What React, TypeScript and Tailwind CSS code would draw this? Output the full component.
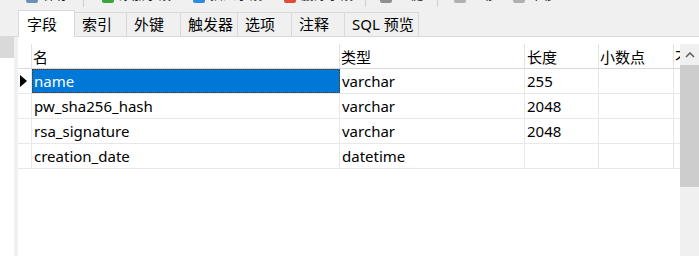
import React from "react";

const font = { fontFamily: '"Noto Sans", "Noto Sans CJK SC", sans-serif' };

function ToolItem({ ml, color, text }: { ml: string; color: string; text: string }) {
  return (
    <div className={`flex items-start ${ml}`}>
      <div className={`w-[12px] h-[3px] rounded-b-[2px] ${color}`} />
      <span className="ml-[5px] -mt-[15px] text-[13px] leading-[18px] text-[#202020] whitespace-nowrap">{text}</span>
    </div>
  );
}

const rows = [
  { name: "name", type: "varchar", len: "255" },
  { name: "pw_sha256_hash", type: "varchar", len: "2048" },
  { name: "rsa_signature", type: "varchar", len: "2048" },
  { name: "creation_date", type: "datetime", len: "" },
];

const tabs = ["索引", "外键", "触发器", "选项", "注释", "SQL 预览"];
const tabW = ["w-[52px]", "w-[54px]", "w-[57px]", "w-[54px]", "w-[53px]", "w-[74px]"];

export default function App() {
  return (
    <div className="w-[699px] h-[256px] bg-[#f0f0f0] overflow-hidden flex flex-col text-[#000]" style={font}>
      {/* toolbar (cut off) */}
      <div className="h-[11px] flex items-start overflow-hidden">
        <ToolItem ml="ml-[26px]" color="bg-[#6f8fb8]" text="保存" />
        <div className="ml-[14px] w-px h-[7px] bg-[#cfcfcf]" />
        <ToolItem ml="ml-[18px]" color="bg-[#3aa53a]" text="添加字段" />
        <ToolItem ml="ml-[22px]" color="bg-[#2b8de0]" text="插入字段" />
        <ToolItem ml="ml-[22px]" color="bg-[#e04c3c]" text="删除字段" />
        <div className="ml-[12px] w-px h-[7px] bg-[#cfcfcf]" />
        <ToolItem ml="ml-[14px]" color="bg-[#909090]" text="主键" />
        <div className="ml-[14px] w-px h-[7px] bg-[#cfcfcf]" />
        <ToolItem ml="ml-[16px]" color="bg-[#b0b0b0]" text="上移" />
        <ToolItem ml="ml-[16px]" color="bg-[#b0b0b0]" text="下移" />
      </div>

      {/* tabs */}
      <div className="h-[26px] flex items-end pl-[18px] border-b border-[#d9d9d9] relative">
        <div className="w-[57px] h-[27px] -mb-px bg-white border border-b-0 border-[#d9d9d9] flex items-center pl-[8px] text-[15px] z-10">
          字段
        </div>
        {tabs.map((t, i) => (
          <div
            key={t}
            className={`${tabW[i]} h-[24px] border-t border-r border-[#d9d9d9] flex items-center pl-[7px] text-[15px] whitespace-nowrap`}
          >
            {t}
          </div>
        ))}
      </div>

      {/* body */}
      <div className="flex flex-1 min-h-0">
        <div className="w-[14px] bg-white">
          <div className="h-[21px] bg-[#d9d9d9]" />
        </div>
        <div className="w-[4px] bg-[#f0f0f0]" />
        <div className="flex-1 bg-white relative pt-[7px] overflow-hidden">
          <div className="grid grid-cols-[14px_308px_185px_74px_75px_60px] text-[15px]">
            {/* header */}
            <div className="h-[25px] border-r border-b border-[#e3e3e3] border-b-[#d8d8d8]" />
            <div className="h-[25px] border-r border-b border-[#e3e3e3] border-b-[#d8d8d8] flex items-center pl-[1px] pt-[3px]">名</div>
            <div className="h-[25px] border-r border-b border-[#e3e3e3] border-b-[#d8d8d8] flex items-center pl-[1px] pt-[3px]">类型</div>
            <div className="h-[25px] border-r border-b border-[#e3e3e3] border-b-[#d8d8d8] flex items-center pl-[2px] pt-[3px]">长度</div>
            <div className="h-[25px] border-r border-b border-[#e3e3e3] border-b-[#d8d8d8] flex items-center pl-[1px] pt-[3px] whitespace-nowrap">小数点</div>
            <div className="h-[25px] border-b border-[#d8d8d8] flex items-center pl-[1px] pt-[3px] whitespace-nowrap">不是 null</div>
            {rows.map((r, i) => (
              <React.Fragment key={r.name}>
                <div className="h-[25px] border-r border-b border-[#e8e8e8] flex items-center justify-center">
                  {i === 0 && (
                    <svg width="7" height="12" viewBox="0 0 7 12" className="ml-[-2px]">
                      <path d="M0 0 L7 6 L0 12 Z" fill="#000" />
                    </svg>
                  )}
                </div>
                <div className="h-[25px] border-r border-b border-[#e8e8e8] flex">
                  {i === 0 ? (
                    <div className="flex-1 bg-[#0078d7] text-white border border-dotted border-[#6a3000] flex items-center pl-[1px] -mr-px">
                      {r.name}
                    </div>
                  ) : (
                    <div className="flex items-center pl-[2px]">{r.name}</div>
                  )}
                </div>
                <div className="h-[25px] border-r border-b border-[#e8e8e8] flex items-center pl-[2px]">{r.type}</div>
                <div className="h-[25px] border-r border-b border-[#e8e8e8] flex items-center pl-[2px]">{r.len}</div>
                <div className="h-[25px] border-r border-b border-[#e8e8e8]" />
                <div className="h-[25px] border-b border-[#e8e8e8]" />
              </React.Fragment>
            ))}
          </div>

          {/* vertical scrollbar */}
          <div className="absolute right-0 top-[7px] bottom-0 w-[19px] bg-[#f0f0f0] flex flex-col">
            <div className="h-[21px] flex items-center justify-center">
              <svg width="10" height="6" viewBox="0 0 10 6">
                <path d="M1 5 L5 1 L9 5" stroke="#606060" strokeWidth="1.6" fill="none" />
              </svg>
            </div>
            <div className="h-[122px] bg-[#cdcdcd]" />
          </div>
        </div>
      </div>
    </div>
  );
}
